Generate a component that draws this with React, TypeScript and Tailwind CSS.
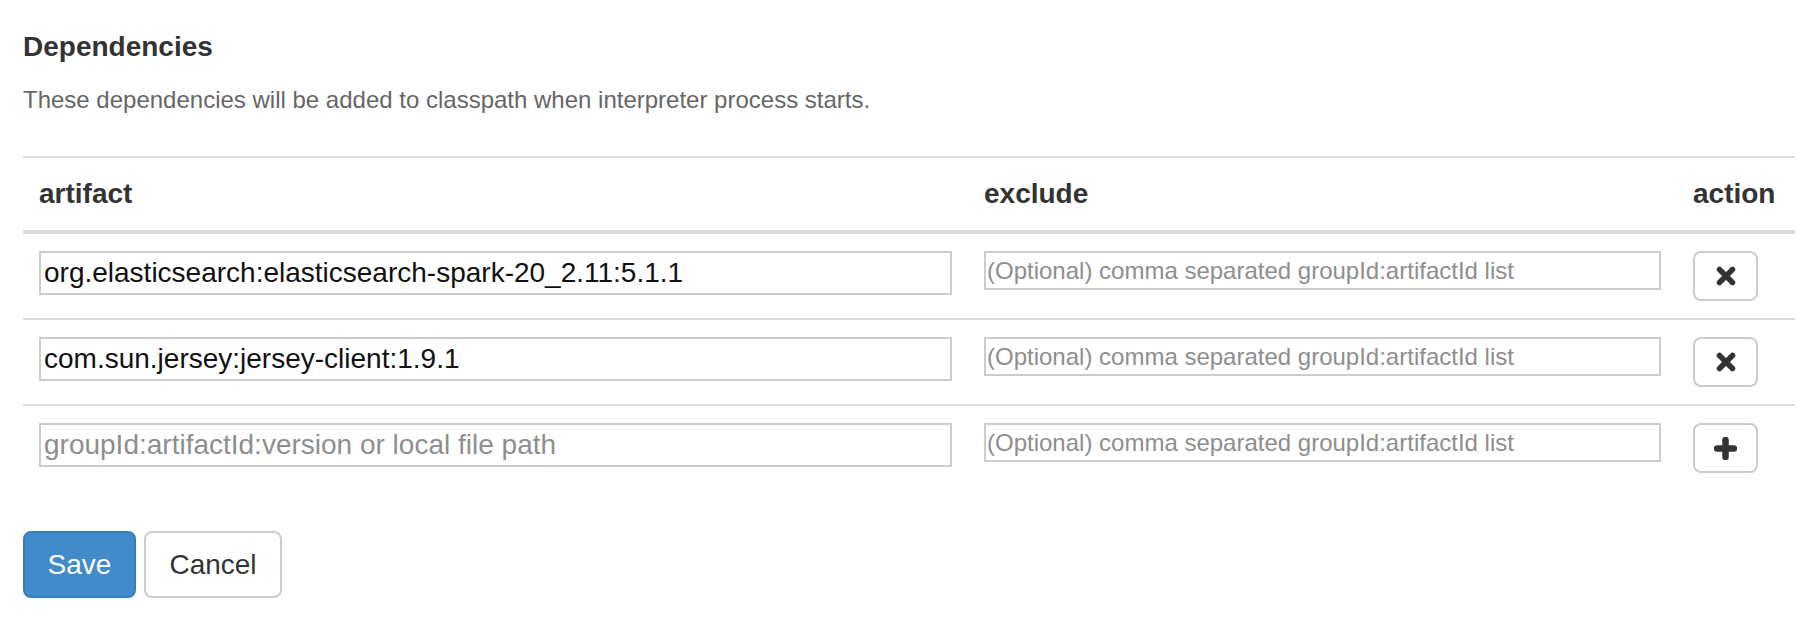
import { useState } from 'react'

type Dep = { artifact: string; exclude: string }

const INITIAL: Dep[] = [
  { artifact: 'org.elasticsearch:elasticsearch-spark-20_2.11:5.1.1', exclude: '' },
  { artifact: 'com.sun.jersey:jersey-client:1.9.1', exclude: '' },
]

function RemoveIcon() {
  return (
    <svg width="20" height="20" viewBox="0 0 20 20" aria-hidden="true">
      <path d="M3.5 3.5L16.5 16.5M16.5 3.5L3.5 16.5" stroke="#333" strokeWidth="5.5" strokeLinecap="round" />
    </svg>
  )
}

function PlusIcon() {
  return (
    <svg width="23" height="23" viewBox="0 0 23 23" aria-hidden="true">
      <path d="M11.5 3V20M3 11.5H20" stroke="#333" strokeWidth="6.5" strokeLinecap="round" />
    </svg>
  )
}

const cols = 'grid grid-cols-[945px_709px_118px]'
const artifactInput =
  'block w-full h-[44px] border-2 border-[#ccc] px-[3px] text-[28px] text-[#111] outline-none placeholder:text-[#8e8e8e]'
const excludeInput =
  'block w-full h-[39px] border-2 border-[#ccc] px-[1px] text-[24px] text-[#111] outline-none placeholder:text-[#8e8e8e]'
const iconBtn =
  'flex items-center justify-center w-[65px] h-[50px] bg-white border-2 border-[#ccc] rounded-[8px]'

export default function App() {
  const [deps, setDeps] = useState<Dep[]>(INITIAL)
  const [draft, setDraft] = useState<Dep>({ artifact: '', exclude: '' })

  return (
    <div className="min-h-screen bg-white pl-[23px] pr-[21px] pt-[27px] font-['Liberation_Sans',Arial,sans-serif] text-[#333]">
      <h4 className="text-[28px] leading-[40px] font-bold text-[#333]">Dependencies</h4>
      <p className="mt-[16px] text-[24px] leading-[34px] text-[#666]">
        These dependencies will be added to classpath when interpreter process starts.
      </p>

      <div className="mt-[39px]">
        {/* header */}
        <div className={`${cols} border-t-2 border-b-4 border-[#ddd]`}>
          <div className="p-4 text-[28px] leading-[40px] font-bold">artifact</div>
          <div className="p-4 text-[28px] leading-[40px] font-bold">exclude</div>
          <div className="p-4 text-[28px] leading-[40px] font-bold">action</div>
        </div>

        {deps.map((dep, i) => (
          <div key={i} className={`${cols} pt-[17px] pb-[17px] ${i > 0 ? 'border-t-2 border-[#ddd]' : ''}`}>
            <div className="px-4">
              <input className={artifactInput} defaultValue={dep.artifact} placeholder="groupId:artifactId:version or local file path" />
            </div>
            <div className="px-4">
              <input className={excludeInput} defaultValue={dep.exclude} placeholder="(Optional) comma separated groupId:artifactId list" />
            </div>
            <div className="px-4">
              <button className={iconBtn} onClick={() => setDeps(deps.filter((_, j) => j !== i))}>
                <RemoveIcon />
              </button>
            </div>
          </div>
        ))}

        {/* new row */}
        <div className={`${cols} pt-[17px] pb-[17px] border-t-2 border-[#ddd]`}>
          <div className="px-4">
            <input
              className={artifactInput}
              value={draft.artifact}
              onChange={e => setDraft({ ...draft, artifact: e.target.value })}
              placeholder="groupId:artifactId:version or local file path"
            />
          </div>
          <div className="px-4">
            <input
              className={excludeInput}
              value={draft.exclude}
              onChange={e => setDraft({ ...draft, exclude: e.target.value })}
              placeholder="(Optional) comma separated groupId:artifactId list"
            />
          </div>
          <div className="px-4">
            <button
              className={iconBtn}
              onClick={() => {
                if (!draft.artifact) return
                setDeps([...deps, draft])
                setDraft({ artifact: '', exclude: '' })
              }}
            >
              <PlusIcon />
            </button>
          </div>
        </div>
      </div>

      <div className="mt-[41px] flex gap-2">
        <button className="w-[113px] h-[67px] rounded-[8px] border-2 border-[#357ebd] bg-[#428bca] text-white text-[28px] leading-[40px]">
          Save
        </button>
        <button className="w-[138px] h-[67px] rounded-[8px] border-2 border-[#ccc] bg-white text-[#333] text-[28px] leading-[40px]">
          Cancel
        </button>
      </div>
    </div>
  )
}
